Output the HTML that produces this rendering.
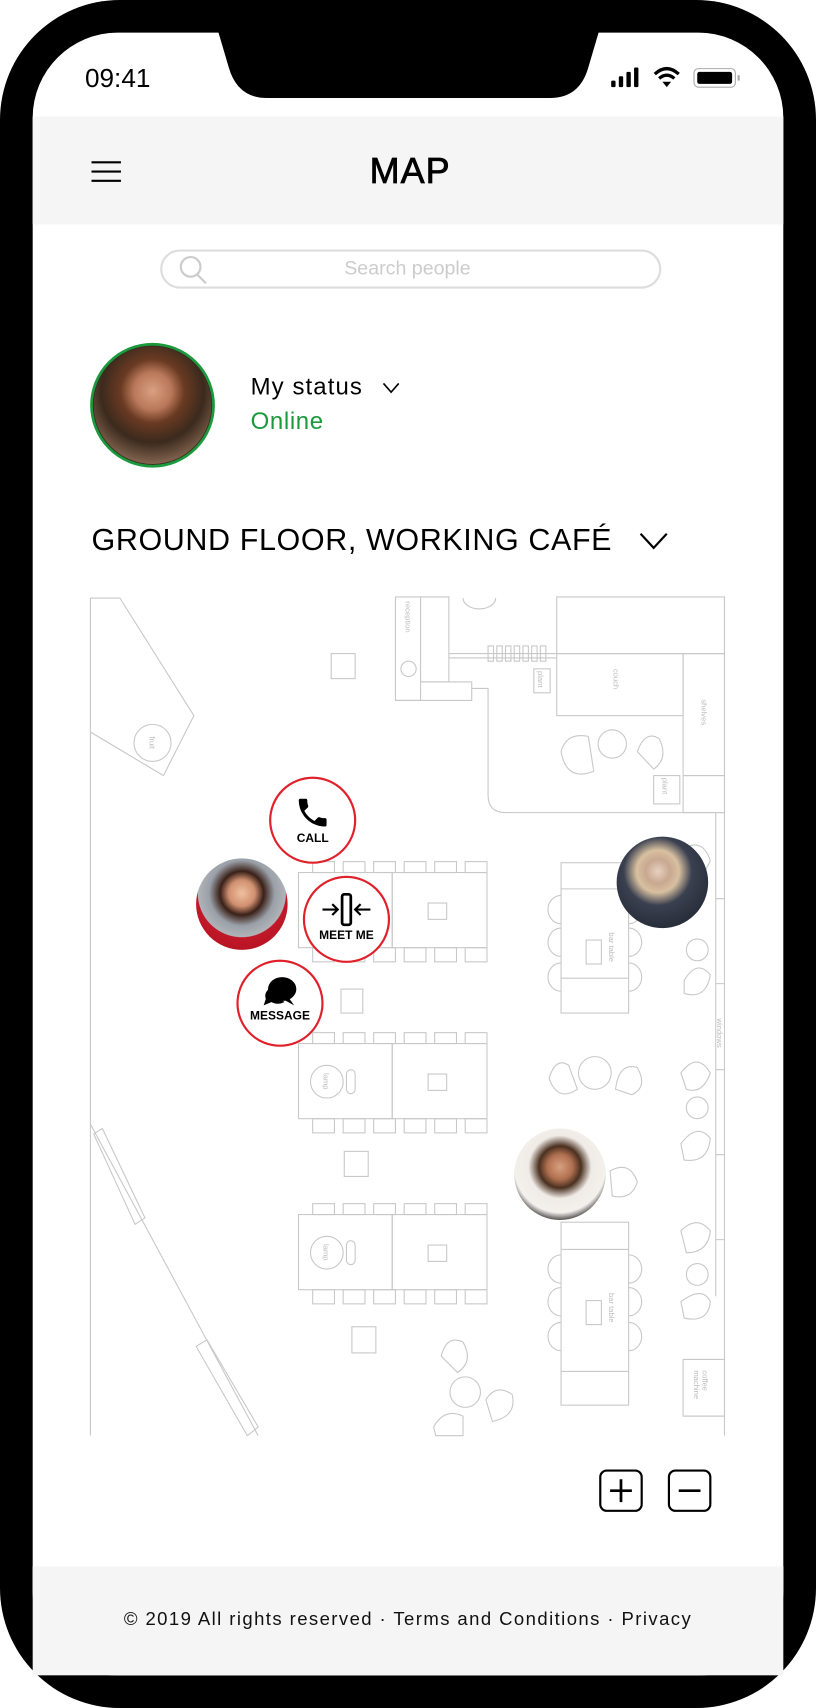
<!DOCTYPE html>
<html><head><meta charset="utf-8"><style>
html,body{margin:0;padding:0;background:#fff;width:816px;height:1708px;overflow:hidden}
#w{position:absolute;left:0;top:0;width:749px;height:1568px;transform:scale(1.08945,1.08929);transform-origin:0 0;font-family:"Liberation Sans",sans-serif}
.abs{position:absolute}
.ph{position:absolute;border-radius:50%;overflow:hidden}
.act{position:absolute;width:80px;height:80px;border:2px solid #e0202a;border-radius:50%;background:#fff;box-sizing:border-box;text-align:center;font-weight:bold;font-size:11px;color:#000}
</style></head><body><div id="w">
<svg class="abs" style="left:0;top:0" width="749" height="1568" viewBox="0 0 749 1568">
<rect x="0" y="0" width="749" height="1568" rx="110" fill="#000"/>
<rect x="30" y="30" width="689" height="1508" rx="78" fill="#fff"/>
<path d="M200 28 L550 28 L540 62 Q532 90 505 90 L245 90 Q218 90 210 62 Z" fill="#000"/>
<rect x="30" y="107" width="689" height="99" fill="#f5f5f5"/>
<rect x="30" y="1438" width="689" height="100" fill="#f5f5f5"/>
<path d="M30 1438 V1460 Q30 1538 108 1538 H641 Q719 1538 719 1460 V1438" fill="#f5f5f5"/>
<rect x="561" y="74" width="4" height="6" rx="1" fill="#000"/><rect x="568" y="70" width="4" height="10" rx="1" fill="#000"/><rect x="575" y="66" width="4" height="14" rx="1" fill="#000"/><rect x="582" y="62" width="4" height="18" rx="1" fill="#000"/>
<path d="M601 68 Q612 58 623 68 M605 72 Q612 66 619 72" stroke="#000" stroke-width="3" fill="none"/><path d="M608 75 L612 80 L616 75 Z" fill="#000"/>
<rect x="637" y="63" width="38" height="17" rx="4" fill="none" stroke="#aaa" stroke-width="1"/><rect x="640" y="66" width="32" height="11" rx="2" fill="#000"/><rect x="677" y="69" width="2" height="5" fill="#aaa"/>
<path d="M84 149 H111 M84 157.5 H111 M84 166 H111" stroke="#000" stroke-width="2"/>
<rect x="148" y="230" width="458" height="34" rx="17" fill="#fff" stroke="#ddd" stroke-width="2"/>
<circle cx="175" cy="245" r="9" fill="none" stroke="#ccc" stroke-width="2"/><path d="M181 252 L189 260" stroke="#ccc" stroke-width="2"/>
<circle cx="140" cy="372" r="56" fill="#3a2a20" stroke="#1a9a3c" stroke-width="2.5"/>
<path d="M352 352 L359 360 L366 352" stroke="#000" stroke-width="1.5" fill="none"/>
<path d="M588 490 L600 503 L612 490" stroke="#000" stroke-width="2" fill="none"/>
<g fill="none" stroke="#c8c8c8" stroke-width="1">
<path d="M83 549 V1318"/>
<path d="M83 549 L110 549 L178 657 L150 712 L83 672"/>
<circle cx="140" cy="682" r="17"/>
<rect x="304" y="600" width="22" height="23"/>
<rect x="363" y="548" width="23" height="95"/><rect x="386" y="548" width="26" height="78"/><path d="M386 626 H433 V643 H363"/>
<circle cx="375" cy="614" r="7"/>
<path d="M433 632 H448 V730 Q448 746 464 746 H665"/>
<path d="M412 600 H665 M412 604 H511"/>
<rect x="448" y="593" width="5" height="14"/><rect x="456" y="593" width="5" height="14"/><rect x="464" y="593" width="5" height="14"/><rect x="472" y="593" width="5" height="14"/><rect x="480" y="593" width="5" height="14"/><rect x="488" y="593" width="5" height="14"/><rect x="496" y="593" width="5" height="14"/>
<path d="M425 549 A15 10 0 0 0 455 549"/>
<rect x="511" y="548" width="154" height="52"/><rect x="511" y="600" width="116" height="57"/><rect x="627" y="600" width="38" height="112"/><rect x="490" y="614" width="15" height="22"/><rect x="600" y="712" width="24" height="26"/><rect x="627" y="712" width="38" height="34"/>
<path d="M665 548 V1318"/>
<path d="M515 690 Q520 672 540 676 L545 708 Q520 718 515 690 Z"/><circle cx="562" cy="683" r="13"/><path d="M585 690 Q592 670 605 678 Q614 696 600 706 Z"/>
<g id="t1"><rect x="274" y="801" width="86" height="69"/><rect x="360" y="801" width="87" height="69"/>
<rect x="287" y="791" width="20" height="10"/><rect x="315" y="791" width="20" height="10"/><rect x="343" y="791" width="20" height="10"/><rect x="371" y="791" width="20" height="10"/><rect x="399" y="791" width="20" height="10"/><rect x="427" y="791" width="20" height="10"/>
<rect x="287" y="870" width="20" height="13"/><rect x="315" y="870" width="20" height="13"/><rect x="343" y="870" width="20" height="13"/><rect x="371" y="870" width="20" height="13"/><rect x="399" y="870" width="20" height="13"/><rect x="427" y="870" width="20" height="13"/>
<rect x="393" y="829" width="17" height="15"/></g>
<use href="#t1" y="157"/><use href="#t1" y="314"/>
<circle cx="300" cy="993" r="15"/><rect x="318" y="982" width="8" height="22" rx="4"/>
<circle cx="300" cy="1150" r="15"/><rect x="318" y="1139" width="8" height="22" rx="4"/>
<rect x="313" y="908" width="20" height="22"/><rect x="316" y="1057" width="22" height="23"/><rect x="323" y="1218" width="22" height="24"/>
<rect x="515" y="792" width="62" height="138"/><path d="M515 816 H577 M515 898 H577"/><rect x="538" y="863" width="14" height="22"/>
<path d="M515 822 A12 13 0 0 0 515 848 M515 852 A12 13 0 0 0 515 878 M515 884 A12 13 0 0 0 515 910 M577 822 A12 13 0 0 1 577 848 M577 852 A12 13 0 0 1 577 878 M577 884 A12 13 0 0 1 577 910"/>
<rect x="515" y="1122" width="62" height="168"/><path d="M515 1147 H577 M515 1259 H577"/><rect x="538" y="1194" width="14" height="22"/>
<path d="M515 1152 A12 13 0 0 0 515 1178 M515 1182 A12 13 0 0 0 515 1208 M515 1214 A12 13 0 0 0 515 1240 M577 1152 A12 13 0 0 1 577 1178 M577 1182 A12 13 0 0 1 577 1208 M577 1214 A12 13 0 0 1 577 1240"/>
<path d="M504 990 Q510 970 522 978 L530 1000 Q512 1012 504 990 Z"/><circle cx="546" cy="985" r="15"/><path d="M565 1000 Q568 975 585 980 Q595 998 580 1005 Z"/>
<path d="M657 746 V1190 M657 825 H665 M657 903 H665 M657 982 H665 M657 1060 H665 M657 1138 H665"/>
<path d="M630 778 Q645 770 652 790 Q645 808 632 800 Z"/><circle cx="640" cy="872" r="10"/><path d="M628 900 Q640 880 652 895 Q648 918 628 912 Z"/>
<path d="M625 985 Q640 965 652 985 Q645 1005 630 1000 Z"/><circle cx="640" cy="1017" r="10"/><path d="M625 1050 Q640 1030 652 1045 Q650 1068 628 1065 Z"/>
<path d="M625 1130 Q640 1115 652 1130 Q650 1150 630 1150 Z"/><circle cx="640" cy="1170" r="10"/><path d="M625 1195 Q645 1180 652 1195 Q650 1215 628 1210 Z"/>
<path d="M560 1075 Q578 1065 585 1085 Q580 1102 562 1098 Z"/>
<rect x="627" y="1248" width="38" height="52"/><path d="M627 1300 H665"/>
<path d="M83 1032 L237 1318"/>
<path d="M94 1036 L86 1041 L124 1124 L133 1118 Z"/><path d="M180 1236 L190 1230 L237 1310 L227 1318 Z"/>
<path d="M405 1245 Q410 1225 425 1232 Q435 1250 420 1260 Z"/><circle cx="427" cy="1278" r="14"/><path d="M446 1285 Q455 1270 470 1280 Q475 1300 452 1305 Z"/><path d="M398 1310 Q408 1292 425 1300 L425 1318 L400 1318 Z"/>
</g>
<g font-size="7" fill="#bbb" font-family="Liberation Sans">
<text transform="translate(372,552) rotate(90)">reception</text>
<text transform="translate(137,676) rotate(90)">fruit</text>
<text transform="translate(563,614) rotate(90)">couch</text>
<text transform="translate(644,642) rotate(90)">shelves</text>
<text transform="translate(494,616) rotate(90)">plant</text>
<text transform="translate(608,714) rotate(90)">plant</text>
<text transform="translate(559,856) rotate(90)">bar table</text>
<text transform="translate(559,1187) rotate(90)">bar table</text>
<text transform="translate(658,935) rotate(90)">windows</text>
<text transform="translate(645,1258) rotate(90)">coffee</text>
<text transform="translate(637,1258) rotate(90)">machine</text>
<text transform="translate(297,985) rotate(90)">lamp</text>
<text transform="translate(297,1142) rotate(90)">lamp</text>
</g>
<rect x="551" y="1350" width="38" height="37" rx="6" fill="#fff" stroke="#000" stroke-width="2"/><path d="M570 1358 V1379 M560 1368.5 H580" stroke="#000" stroke-width="2.5"/>
<rect x="614" y="1350" width="38" height="37" rx="6" fill="#fff" stroke="#000" stroke-width="2"/><path d="M623 1368.5 H643" stroke="#000" stroke-width="2.5"/>
</svg>
<div class="abs" style="left:78px;top:59px;font-size:24px">09:41</div>
<div class="abs" style="left:0;width:753px;top:138px;text-align:center;font-size:33px;letter-spacing:1px;-webkit-text-stroke:0.7px #000">MAP</div>
<div class="abs" style="left:148px;width:452px;top:236px;text-align:center;font-size:18px;color:#ccc">Search people</div>
<div class="ph" style="left:86px;top:318px;width:108px;height:108px;background:radial-gradient(circle at 50% 38%,#d9a080 0,#b9785a 20%,#6a3a22 34%,#3b2a1d 55%,#8a6a55 80%,#2a2220 100%)"></div>
<div class="abs" style="left:230px;top:342px;font-size:22px;letter-spacing:1px">My status</div>
<div class="abs" style="left:230px;top:374px;font-size:22px;letter-spacing:0.6px;color:#1a9a3c">Online</div>
<div class="abs" style="left:84px;top:480px;font-size:28px;letter-spacing:0.55px">GROUND FLOOR, WORKING CAFÉ</div>
<div class="ph" style="left:180px;top:788px;width:84px;height:84px;background:radial-gradient(circle at 50% 38%,#f0c0a0 0,#d09070 18%,#3a2018 30%,#9aa0a8 45%,#b0b4b8 60%,#c01828 61%,#b01020 100%)"></div>
<div class="ph" style="left:566px;top:768px;width:84px;height:84px;background:radial-gradient(circle at 45% 38%,#e8d0c0 0,#c8a890 16%,#d8c0a0 28%,#3a4050 45%,#1a1e28 100%)"></div>
<div class="ph" style="left:472px;top:1036px;width:84px;height:84px;background:radial-gradient(circle at 50% 42%,#d8a080 0,#b07050 18%,#4a3020 30%,#f0ebe6 45%,#f4f0ec 65%,#151515 80%)"></div>
<div class="act" style="left:247px;top:713px"><svg width="34" height="34" viewBox="0 0 24 24" style="margin-top:14px"><path d="M6.6 10.8c1.4 2.8 3.8 5.1 6.6 6.6l2.2-2.2c.3-.3.7-.4 1-.2 1.1.4 2.3.6 3.6.6.6 0 1 .4 1 1V20c0 .6-.4 1-1 1C10.6 21 3 13.4 3 4c0-.6.4-1 1-1h3.5c.6 0 1 .4 1 1 0 1.3.2 2.5.6 3.6.1.3 0 .7-.2 1L6.6 10.8z" fill="#000"/></svg><div style="margin-top:-2px">CALL</div></div>
<div class="act" style="left:278px;top:804px"><svg width="48" height="34" viewBox="0 0 48 34" style="margin-top:12px"><path d="M2 17 H16 M11 12 L16 17 L11 22 M46 17 H32 M37 12 L32 17 L37 22" stroke="#000" stroke-width="2" fill="none"/><rect x="20" y="3" width="8" height="28" rx="2" fill="none" stroke="#000" stroke-width="2.5"/></svg><div style="margin-top:-2px">MEET ME</div></div>
<div class="act" style="left:217px;top:881px"><svg width="36" height="32" viewBox="0 0 36 32" style="margin-top:12px"><ellipse cx="20" cy="13" rx="13" ry="11" fill="#000"/><path d="M26 21 L31 28 L22 23 Z" fill="#000"/><path d="M9 12 Q3 16 5 22 L3 28 L10 25 Q16 28 22 25" fill="#000"/></svg><div style="margin-top:-3px">MESSAGE</div></div>
<div class="abs" style="left:0;width:749px;top:1477px;text-align:center;font-size:17px;letter-spacing:1.3px;color:#111">© 2019 All rights reserved · Terms and Conditions · Privacy</div>
</div></body></html>
